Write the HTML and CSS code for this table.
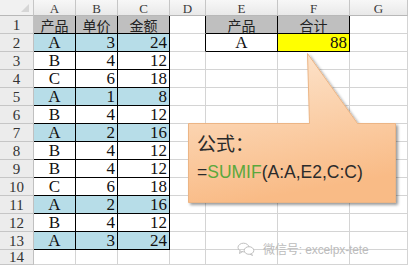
FILE: index.html
```html
<!DOCTYPE html>
<html>
<head>
<meta charset="utf-8">
<link rel="stylesheet" href="styles.css">
</head>
<body>
<div class="sheet">
  <div class="corner"><span class="tri"></span></div>
  <div class="ch">A</div><div class="ch">B</div><div class="ch">C</div><div class="ch">D</div><div class="ch">E</div><div class="ch">F</div><div class="ch">G</div>

  <div class="rh edge">1</div><div class="t hd ctr cjk">产品</div><div class="t hd ctr cjk">单价</div><div class="t hd ctr cjk">金额</div><div class="c edge"></div><div class="t hd ctr cjk">产品</div><div class="t hd ctr cjk">合计</div><div class="c"></div>
  <div class="rh edge">2</div><div class="t bl ctr">A</div><div class="t bl num">3</div><div class="t bl num">24</div><div class="c edge"></div><div class="t ctr">A</div><div class="t y num">88</div><div class="c"></div>
  <div class="rh edge">3</div><div class="t ctr">B</div><div class="t num">4</div><div class="t num">12</div><div class="c"></div><div class="c"></div><div class="c"></div><div class="c"></div>
  <div class="rh edge">4</div><div class="t ctr">C</div><div class="t num">6</div><div class="t num">18</div><div class="c"></div><div class="c"></div><div class="c"></div><div class="c"></div>
  <div class="rh edge">5</div><div class="t bl ctr">A</div><div class="t bl num">1</div><div class="t bl num">8</div><div class="c"></div><div class="c"></div><div class="c"></div><div class="c"></div>
  <div class="rh edge">6</div><div class="t ctr">B</div><div class="t num">4</div><div class="t num">12</div><div class="c"></div><div class="c"></div><div class="c"></div><div class="c"></div>
  <div class="rh edge">7</div><div class="t bl ctr">A</div><div class="t bl num">2</div><div class="t bl num">16</div><div class="c"></div><div class="c"></div><div class="c"></div><div class="c"></div>
  <div class="rh edge">8</div><div class="t ctr">B</div><div class="t num">4</div><div class="t num">12</div><div class="c"></div><div class="c"></div><div class="c"></div><div class="c"></div>
  <div class="rh edge">9</div><div class="t ctr">B</div><div class="t num">4</div><div class="t num">12</div><div class="c"></div><div class="c"></div><div class="c"></div><div class="c"></div>
  <div class="rh edge">10</div><div class="t ctr">C</div><div class="t num">6</div><div class="t num">18</div><div class="c"></div><div class="c"></div><div class="c"></div><div class="c"></div>
  <div class="rh edge">11</div><div class="t bl ctr">A</div><div class="t bl num">2</div><div class="t bl num">16</div><div class="c"></div><div class="c"></div><div class="c"></div><div class="c"></div>
  <div class="rh edge">12</div><div class="t ctr">B</div><div class="t num">4</div><div class="t num">12</div><div class="c"></div><div class="c"></div><div class="c"></div><div class="c"></div>
  <div class="rh edge">13</div><div class="t bl ctr">A</div><div class="t bl num">3</div><div class="t bl num">24</div><div class="c"></div><div class="c"></div><div class="c"></div><div class="c"></div>
  <div class="rh">14</div><div class="c"></div><div class="c"></div><div class="c"></div><div class="c"></div><div class="c"></div><div class="c"></div><div class="c"></div>
</div>

<svg class="callout" width="408" height="265" viewBox="0 0 408 265">
  <defs>
    <linearGradient id="g" x1="0" y1="0" x2="0.25" y2="1">
      <stop offset="0" stop-color="#fde8d3"/>
      <stop offset="1" stop-color="#f9bb86"/>
    </linearGradient>
    <filter id="sh" x="-10%" y="-10%" width="130%" height="130%">
      <feGaussianBlur in="SourceAlpha" stdDeviation="1.6"/>
      <feOffset dx="2" dy="2" result="b"/>
      <feComponentTransfer><feFuncA type="linear" slope="0.4"/></feComponentTransfer>
      <feMerge><feMergeNode/><feMergeNode in="SourceGraphic"/></feMerge>
    </filter>
  </defs>
  <path d="M188.5 123.5 L309.5 123.5 L307.5 53.5 L357.5 123.5 L395.5 123.5 L395.5 202.5 L188.5 202.5 Z" fill="url(#g)" stroke="#ecb585" stroke-width="1" filter="url(#sh)"/>
</svg>

<div class="note">
  <div class="t1">公式：</div>
  <div class="t2">=<span class="fn">SUMIF</span>(A:A,E2,C:C)</div>
</div>

<div class="wm">
  <svg class="wx" width="18" height="14" viewBox="0 0 18 14">
    <ellipse cx="6.5" cy="5.5" rx="5.5" ry="4.3" fill="none" stroke="#c0c0c0" stroke-width="1"/>
    <path d="M3 9 L2.5 11.5 L5.5 9.6" fill="none" stroke="#c0c0c0" stroke-width="1"/>
    <ellipse cx="12" cy="8.5" rx="4.8" ry="3.8" fill="#fff" stroke="#c0c0c0" stroke-width="1"/>
    <path d="M14.5 11.8 L15.5 13.5 L13 12.2" fill="none" stroke="#c0c0c0" stroke-width="1"/>
  </svg>
  <span class="wmt">微信号: excelpx-tete</span>
</div>
</body>
</html>
```

FILE: styles.css
```css
html, body {
  margin: 0;
  padding: 0;
  background: #fff;
  overflow: hidden;
}
body {
  width: 408px;
  height: 265px;
  position: relative;
  font-family: "Liberation Serif", "Noto Sans CJK SC", serif;
}
.sheet {
  display: grid;
  grid-template-columns: 34px 42px 42px 52px 36px 72px 72px 58px;
  grid-template-rows: 16px repeat(13, 18px) 15px;
  width: 408px;
  height: 265px;
}
.sheet > div {
  box-sizing: border-box;
  border-right: 1px solid #d4d4d4;
  border-bottom: 1px solid #d4d4d4;
  display: flex;
  align-items: center;
  overflow: hidden;
  white-space: nowrap;
  line-height: 1;
}
.corner {
  background: #f1f1f1;
  border-right-color: #c6c6c6 !important;
  border-bottom-color: #b8b8b8 !important;
  position: relative;
}
.tri {
  position: absolute;
  right: 4px;
  bottom: 3px;
  width: 0;
  height: 0;
  border-left: 8px solid transparent;
  border-bottom: 8px solid #d6d6d6;
}
.ch {
  background: linear-gradient(#f7f7f7, #e9e9e9);
  border-right-color: #c6c6c6 !important;
  border-bottom-color: #b8b8b8 !important;
  justify-content: center;
  font-size: 13px;
  color: #3a3a3a;
  padding-top: 1px;
}
.rh {
  background: #ececec;
  border-right-color: #c0c0c0 !important;
  border-bottom-color: #c6c6c6 !important;
  justify-content: center;
  font-size: 15px;
  color: #333;
  padding-top: 1px;
}
.sheet > .edge {
  border-right-color: #000;
}
.sheet > .t {
  border-right-color: #000;
  border-bottom-color: #000;
  font-size: 17px;
  color: #111;
}
.hd { background: #bfbfbf; }
.bl { background: #b7dde8; }
.y { background: #ffff00; }
.ctr { justify-content: center; }
.num { justify-content: flex-end; padding-right: 2px; }
.sheet > .cjk {
  font-family: "Noto Sans CJK SC", sans-serif;
  font-size: 14px;
  color: #222;
}
.callout {
  position: absolute;
  left: 0;
  top: 0;
}
.note {
  position: absolute;
  left: 197px;
  top: 130px;
  color: #2b2b2b;
}
.t1 {
  font-family: "Noto Sans CJK SC", sans-serif;
  font-size: 19px;
  line-height: 26px;
}
.t2 {
  margin-top: 5px;
  font-family: "Liberation Sans", "Noto Sans", sans-serif;
  font-size: 17.5px;
  line-height: 22px;
}
.fn { color: #5aa83c; }
.wm {
  position: absolute;
  left: 237px;
  top: 240px;
  display: flex;
  align-items: center;
  gap: 8px;
  color: #bcbcbc;
}
.wmt {
  font-family: "Liberation Sans", "Noto Sans CJK SC", sans-serif;
  font-size: 12px;
  letter-spacing: -0.1px;
}
```
